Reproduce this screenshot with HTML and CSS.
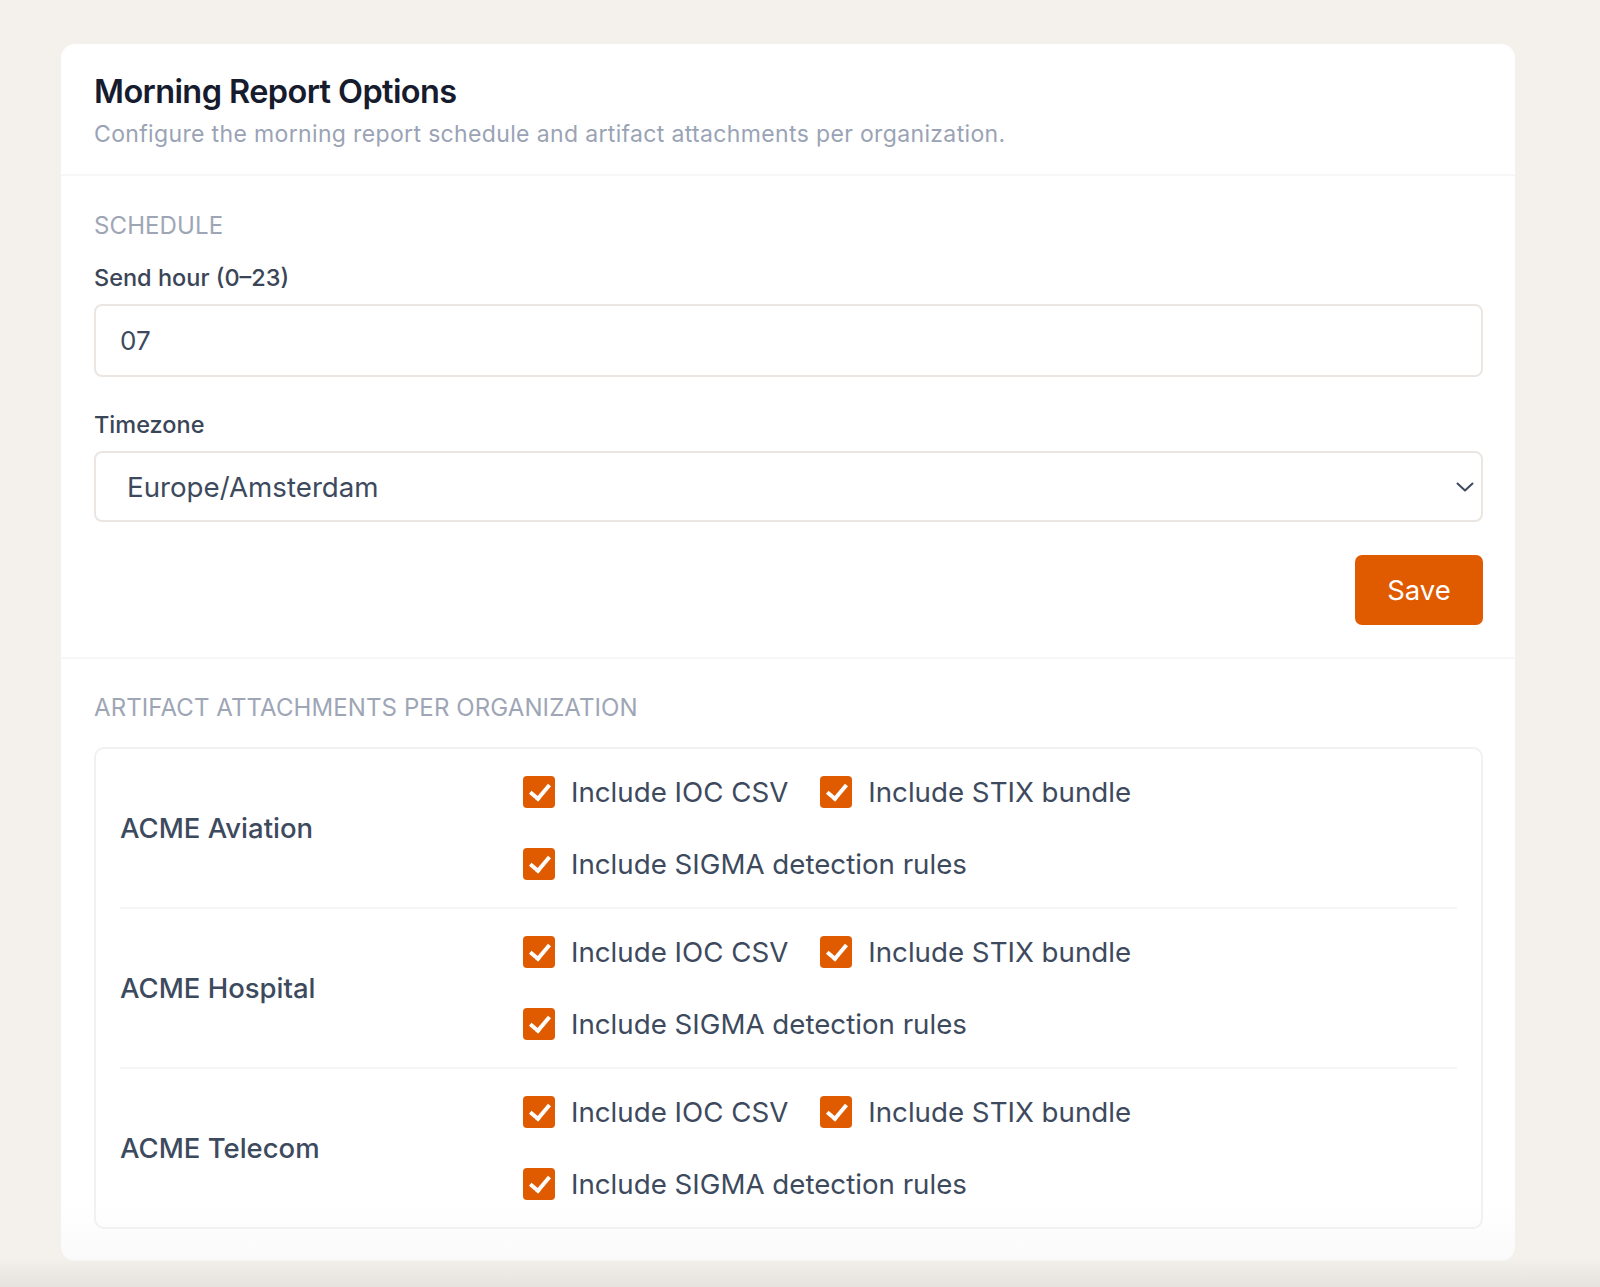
FILE: index.html
```html
<!DOCTYPE html>
<html lang="en">
<head>
    <meta charset="UTF-8">
    <meta name="viewport" content="width=device-width, initial-scale=1.0">
    <title>Morning Report Options</title>
    <link rel="stylesheet" href="styles.css">
</head>
<body>
    <div class="card">
        <header class="card-head">
            <h1>Morning Report Options</h1>
            <p class="subtitle">Configure the morning report schedule and artifact attachments per organization.</p>
        </header>

        <section class="section">
            <h2 class="section-title">Schedule</h2>
            <label class="field-label" for="hour">Send hour (0–23)</label>
            <input class="field" id="hour" type="text" value="07">

            <label class="field-label gap-top" for="tz">Timezone</label>
            <div class="select-wrap">
                <select class="field select" id="tz">
                    <option>Europe/Amsterdam</option>
                    <option>Europe/London</option>
                    <option>UTC</option>
                </select>
                <svg class="chevron" width="18" height="10" viewBox="0 0 18 10"><path d="M1.5 1.5 L9 8.5 L16.5 1.5" fill="none" stroke="#3d4a5e" stroke-width="2" stroke-linecap="round" stroke-linejoin="round"/></svg>
            </div>

            <div class="actions">
                <button class="btn-save">Save</button>
            </div>
        </section>

        <section class="section last">
            <h2 class="section-title">Artifact attachments per organization</h2>
            <div class="org-box">
                <div class="org-row">
                    <div class="org-name">ACME Aviation</div>
                    <div class="org-opts">
                        <label class="opt"><span class="check"></span>Include IOC CSV</label>
                        <label class="opt"><span class="check"></span>Include STIX bundle</label>
                        <label class="opt"><span class="check"></span>Include SIGMA detection rules</label>
                    </div>
                </div>
                <div class="org-row">
                    <div class="org-name">ACME Hospital</div>
                    <div class="org-opts">
                        <label class="opt"><span class="check"></span>Include IOC CSV</label>
                        <label class="opt"><span class="check"></span>Include STIX bundle</label>
                        <label class="opt"><span class="check"></span>Include SIGMA detection rules</label>
                    </div>
                </div>
                <div class="org-row">
                    <div class="org-name">ACME Telecom</div>
                    <div class="org-opts">
                        <label class="opt"><span class="check"></span>Include IOC CSV</label>
                        <label class="opt"><span class="check"></span>Include STIX bundle</label>
                        <label class="opt"><span class="check"></span>Include SIGMA detection rules</label>
                    </div>
                </div>
            </div>
        </section>
    </div>
    <div class="bottom-fade"></div>
</body>
</html>
```

FILE: styles.css
```css
body, html {
    margin: 0;
    padding: 0;
    font-family: Inter, "Noto Sans", sans-serif;
    background-color: #f4f0ec;
    color: #3d4a5e;
}
body {
    padding: 44px 85px 0 61px;
    height: 1287px;
    box-sizing: border-box;
    overflow: hidden;
    position: relative;
}
.card {
    background-color: white;
    border-radius: 14px;
    padding-bottom: 32px;
    background-image: linear-gradient(to bottom, #fff 0, #fff calc(100% - 60px), #fafafa 100%);
}
.card-head {
    padding: 30px 33px 26px;
    border-bottom: 2px solid #f8f7f6;
}
h1 {
    margin: 0;
    font-size: 32.5px;
    line-height: 36px;
    font-weight: 600;
    letter-spacing: -0.6px;
    color: #161b2e;
}
.subtitle {
    margin: 10px 0 0;
    font-size: 23px;
    line-height: 28px;
    color: #9aa3b5;
    letter-spacing: 0.35px;
}
.section {
    padding: 36px 32px 32px 33px;
    border-bottom: 2px solid #f8f7f6;
}
.section.last {
    padding-top: 35px;
    padding-bottom: 0;
    border-bottom: none;
}
.section-title {
    margin: 0 0 24px;
    font-size: 24px;
    line-height: 28px;
    font-weight: 400;
    text-transform: uppercase;
    color: #9ea6b6;
    letter-spacing: 0.1px;
}
.section.last .section-title {
    margin-bottom: 25px;
}
.field-label {
    display: block;
    font-size: 23.5px;
    line-height: 28px;
    font-weight: 500;
    color: #3a4557;
    margin-bottom: 12px;
}
.field-label.gap-top {
    margin-top: 34px;
}
.field {
    display: block;
    width: 100%;
    box-sizing: border-box;
    height: 73px;
    padding: 0 24px;
    border: 2px solid #ebe6e1;
    border-radius: 8px;
    background: white;
    font-family: inherit;
    font-size: 26px;
    color: #3d4a5e;
    outline: none;
}
.select-wrap {
    position: relative;
}
.select {
    height: 71px;
    padding-left: 31px;
    font-size: 27.7px;
    appearance: none;
    -webkit-appearance: none;
}
.chevron {
    position: absolute;
    right: 9px;
    top: 31px;
}
.actions {
    display: flex;
    justify-content: flex-end;
    margin-top: 33px;
}
.btn-save {
    width: 128px;
    height: 70px;
    border: none;
    border-radius: 7px;
    background-color: #e05a00;
    color: white;
    font-family: inherit;
    font-size: 27.5px;
    cursor: pointer;
}
.org-box {
    border: 2px solid #f3f1ef;
    border-radius: 10px;
    padding: 0 24px;
}
.org-row {
    display: flex;
    align-items: center;
    padding: 23px 0 23px;
    border-bottom: 2px solid #f6f5f4;
}
.org-row:last-child {
    border-bottom: none;
}
.org-name {
    width: 403px;
    flex-shrink: 0;
    font-size: 27.5px;
    font-weight: 500;
    color: #3d4a5e;
}
.org-opts {
    display: flex;
    flex-wrap: wrap;
    column-gap: 32px;
    row-gap: 32px;
    width: 680px;
}
.opt {
    display: flex;
    align-items: center;
    height: 40px;
    font-size: 27.7px;
    color: #3d4a5e;
    cursor: pointer;
}
.check {
    width: 32px;
    height: 32px;
    margin-right: 16px;
    border-radius: 4px;
    background-color: #e05a00;
    position: relative;
    flex-shrink: 0;
}
.check::after {
    content: "";
    position: absolute;
    left: 11px;
    top: 4px;
    width: 8px;
    height: 16px;
    border: solid white;
    border-width: 0 4.5px 4.5px 0;
    transform: rotate(40deg);
}
.bottom-fade {
    position: absolute;
    left: 0;
    right: 0;
    bottom: 0;
    height: 30px;
    background: linear-gradient(to bottom, rgba(230,226,222,0), #e6e2de);
}
```
